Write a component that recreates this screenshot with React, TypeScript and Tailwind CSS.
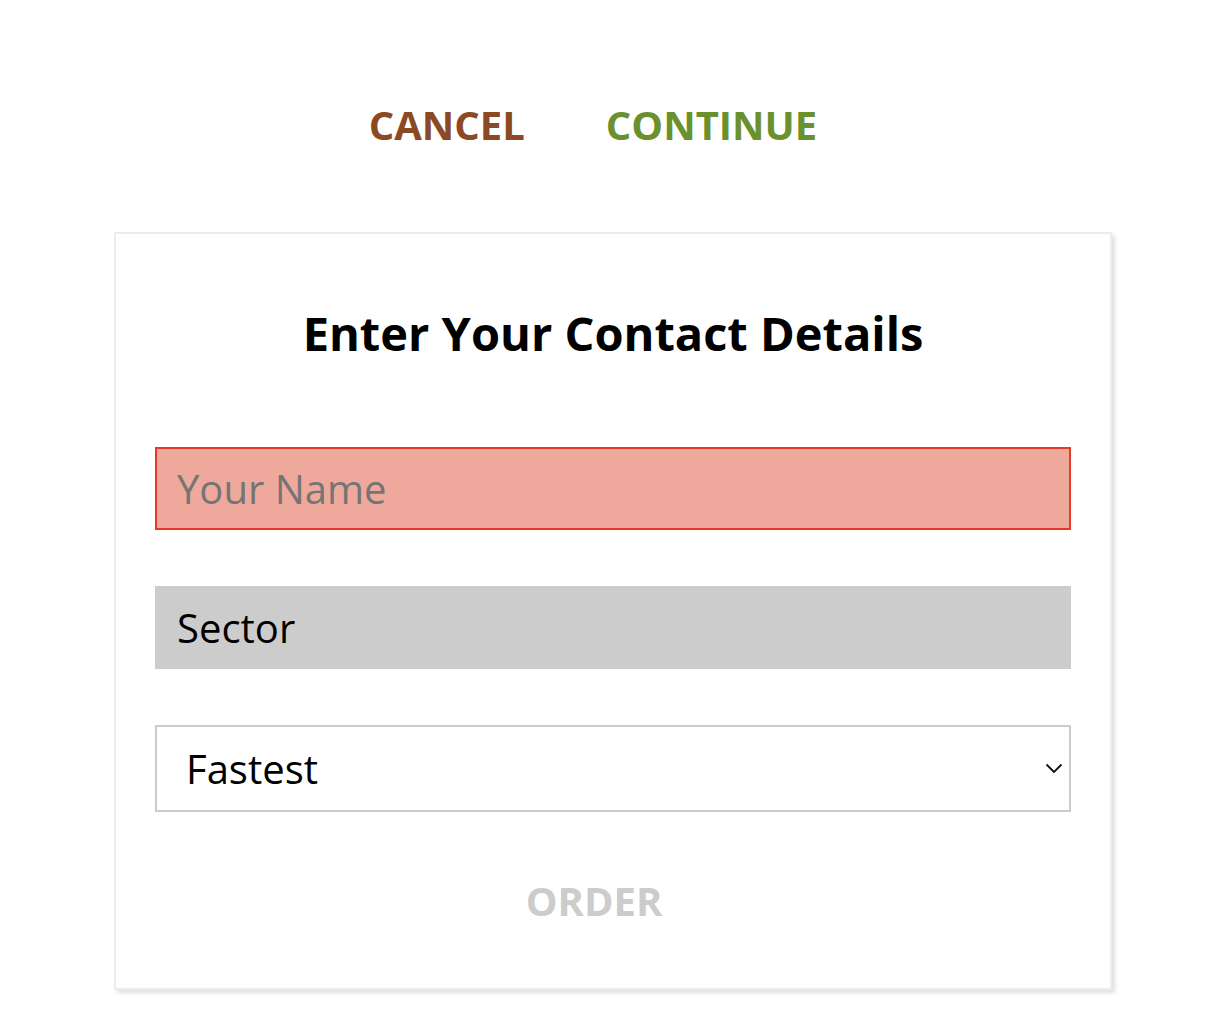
import { useState } from 'react';

const font = { fontFamily: '"Open Sans", "Noto Sans", sans-serif' };

export default function App() {
  const [name, setName] = useState('');
  const [speed, setSpeed] = useState('Fastest');

  return (
    <div className="min-h-screen bg-white pb-10" style={font}>
      <div className="flex justify-center gap-[81px] pt-[96px] pr-[37px]">
        <button type="button" className="text-[40px] font-bold leading-[58px] text-[#8b4a24]">
          CANCEL
        </button>
        <button type="button" className="text-[40px] font-bold leading-[58px] text-[#6a912e]">
          CONTINUE
        </button>
      </div>

      <div className="mx-[114px] mt-[78px] w-[998px] border-2 border-[#ececec] bg-white px-[39px] pb-[61px] pt-[61px] shadow-[3px_3px_4px_rgba(0,0,0,0.12)]">
        <h1 className="text-center text-[47px] font-bold leading-[76px] text-black">Enter Your Contact Details</h1>

        <div className="mt-[76px] flex flex-col gap-[56px]">
          <input
            value={name}
            onChange={(e) => setName(e.target.value)}
            placeholder="Your Name"
            className="h-[83px] w-full border-2 border-[#e5392b] bg-[#efa89c] px-[20px] text-[40px] text-black outline-none placeholder:text-[#757575]"
          />
          <div className="flex h-[83px] items-center bg-[#cccccc] px-[22px] text-[40px] text-black">Sector</div>
          <div className="relative">
            <select
              value={speed}
              onChange={(e) => setSpeed(e.target.value)}
              className="h-[87px] w-full appearance-none border-2 border-[#cccccc] bg-white px-[29px] text-[40px] text-black outline-none"
            >
              <option>Fastest</option>
              <option>Cheapest</option>
            </select>
            <svg
              className="pointer-events-none absolute right-[8px] top-[38px]"
              width="18"
              height="11"
              viewBox="0 0 18 11"
              fill="none"
              stroke="#111"
              strokeWidth="1.8"
            >
              <path d="M1.5 1.5 L9 9 L16.5 1.5" />
            </svg>
          </div>
        </div>

        <div className="mt-[63px] flex justify-center pr-[38px]">
          <button type="button" className="text-[40px] font-bold leading-[52px] text-[#cccccc]">
            ORDER
          </button>
        </div>
      </div>
    </div>
  );
}
